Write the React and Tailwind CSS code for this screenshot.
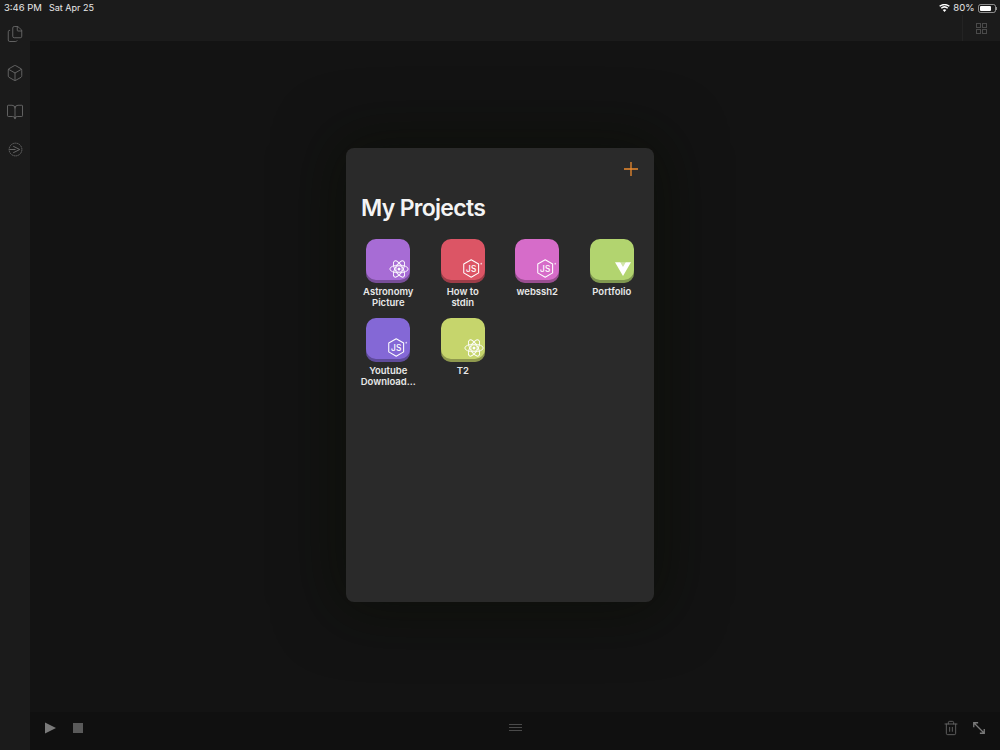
import { Files, Box, BookOpen, Trash2 } from "lucide-react";

const font = { fontFamily: "Inter, 'Liberation Sans', sans-serif" };

function ReactBadge() {
  return (
    <svg viewBox="0 0 24 24" className="absolute right-[1px] bottom-[4px] w-[20px] h-[20px]" fill="none" stroke="white" strokeWidth="1.1">
      <circle cx="12" cy="12" r="1.8" fill="white" stroke="none" />
      <circle cx="12" cy="12" r="3.8" strokeWidth="0.8" />
      <ellipse cx="12" cy="12" rx="11" ry="4.6" />
      <ellipse cx="12" cy="12" rx="11" ry="4.6" transform="rotate(60 12 12)" />
      <ellipse cx="12" cy="12" rx="11" ry="4.6" transform="rotate(120 12 12)" />
    </svg>
  );
}

function NodeBadge() {
  return (
    <svg viewBox="0 0 24 24" className="absolute right-[2px] bottom-[4px] w-[21px] h-[21px]" fill="none" stroke="white">
      <path d="M10.5 2 L19 6.8 V17 L10.5 22 L2 17 V6.8 Z" strokeWidth="1.2" strokeLinejoin="round" />
      <text x="10.5" y="15.6" textAnchor="middle" fontSize="9.5" fontWeight="500" fill="white" stroke="none" fontFamily="Inter, sans-serif">JS</text>
      <circle cx="22" cy="6.5" r="1" fill="white" stroke="none" opacity="0.7" />
    </svg>
  );
}

function VueBadge() {
  return (
    <svg viewBox="0 0 24 24" className="absolute right-[3px] bottom-[7px] w-[16px] h-[15px]" preserveAspectRatio="none">
      <path d="M0 2 H8 L12 9 L16 2 H24 L12 24 Z" fill="white" />
      <path d="M8 2 H16 L12 9 Z" fill="white" opacity="0.4" />
    </svg>
  );
}

function Tile({ name, bg, badge }) {
  return (
    <div className="flex flex-col items-center">
      <div className={"relative w-[44px] h-[44px] rounded-[10px] shadow-[inset_0_-3px_0_rgba(0,0,0,0.28)] " + bg}>
        {badge}
      </div>
      <div className="mt-[3px] w-[72px] text-center text-[9.5px] leading-[11px] font-semibold text-[#e8e8e8]">{name}</div>
    </div>
  );
}

const projects = [
  { name: <>Astronomy<br />Picture</>, bg: "bg-[#a76cd5]", badge: <ReactBadge /> },
  { name: <>How to<br />stdin</>, bg: "bg-[#dc5565]", badge: <NodeBadge /> },
  { name: "webssh2", bg: "bg-[#d66cc9]", badge: <NodeBadge /> },
  { name: "Portfolio", bg: "bg-[#b2d46f]", badge: <VueBadge /> },
  { name: <>Youtube<br />Download...</>, bg: "bg-[#8468d6]", badge: <NodeBadge /> },
  { name: "T2", bg: "bg-[#c6d56c]", badge: <ReactBadge /> },
];

function Wifi() {
  return (
    <svg viewBox="0 0 16 12" className="w-[11px] h-[8px]" fill="white">
      <path d="M8 12 L5.4 8.9 A4 4 0 0 1 10.6 8.9 Z" />
      <path d="M3.9 7.2 L2.4 5.5 A8.6 8.6 0 0 1 13.6 5.5 L12.1 7.2 A6.3 6.3 0 0 0 3.9 7.2 Z" />
      <path d="M1.4 4.3 L0 2.7 A12.4 12.4 0 0 1 16 2.7 L14.6 4.3 A10.2 10.2 0 0 0 1.4 4.3 Z" />
    </svg>
  );
}

function Battery() {
  return (
    <div className="flex items-center">
      <div className="w-[18px] h-[9px] rounded-[2.5px] border border-white/50 p-[1px]">
        <div className="h-full w-[80%] bg-white rounded-[1px]" />
      </div>
      <div className="w-[1px] h-[3px] bg-white/50 ml-[0.5px]" />
    </div>
  );
}

function RunIcon() {
  return (
    <svg viewBox="0 0 16 16" className="w-[15px] h-[15px]" fill="none" stroke="#6a6a6a" strokeWidth="1">
      <circle cx="8" cy="8" r="6.8" strokeDasharray="1.6 0.6" />
      <path d="M1.5 8 H8 M5.5 4.5 L12.5 8 L5.5 11.5" strokeLinejoin="round" />
    </svg>
  );
}

function Expand() {
  return (
    <svg viewBox="0 0 16 16" className="w-[14px] h-[14px]" fill="none" stroke="#7a7a7a" strokeWidth="1.5">
      <path d="M2 7 V2 H7 M2 2 L14 14 M9 14 H14 V9" />
    </svg>
  );
}

export default function App() {
  return (
    <div className="relative w-[1000px] h-[750px] overflow-hidden flex flex-col bg-[#1b1b1b] text-white" style={font}>
      <div className="h-[15px] pt-[1px] flex items-center justify-between pl-[4px] pr-[3px] text-[9.5px] text-[#e8e8e8]">
        <div className="flex gap-[7px]">
          <span>3:46 PM</span>
          <span className="text-[9px]">Sat Apr 25</span>
        </div>
        <div className="flex items-center gap-[3px]">
          <Wifi />
          <span>80%</span>
          <Battery />
        </div>
      </div>
      <div className="flex-1 flex min-h-0">
        <aside className="w-[30px] flex flex-col items-center pt-[10px] gap-[21px] text-[#6a6a6a]">
          <Files size={18} strokeWidth={1.2} />
          <Box size={18} strokeWidth={1.2} />
          <BookOpen size={18} strokeWidth={1.2} />
          <RunIcon />
        </aside>
        <div className="flex-1 flex flex-col min-w-0">
          <div className="h-[26px] flex justify-end">
            <div className="w-[38px] border-l border-[#232323] flex items-center justify-center">
              <div className="grid grid-cols-2 gap-[1px]">
                <div className="w-[5px] h-[5px] border border-[#4a4a4a]" />
                <div className="w-[5px] h-[5px] border border-[#4a4a4a]" />
                <div className="w-[5px] h-[5px] border border-[#4a4a4a]" />
                <div className="w-[5px] h-[5px] border border-[#4a4a4a]" />
              </div>
            </div>
          </div>
          <div className="flex-1 bg-[#131313]" />
          <div className="h-[38px] pb-[6px] bg-[#101010] flex items-center justify-between pl-[15px] pr-[14px] relative">
            <div className="flex items-center gap-[17px]">
              <svg viewBox="0 0 12 12" className="w-[11px] h-[12px]" fill="#7a7a7a"><path d="M0 0 L12 6 L0 12 Z" /></svg>
              <div className="w-[10px] h-[10px] bg-[#5a5a5a]" />
            </div>
            <div className="absolute left-[479px] top-[12px] flex flex-col gap-[2px]">
              <div className="w-[13px] h-[1px] bg-[#4a4a4a]" />
              <div className="w-[13px] h-[1px] bg-[#4a4a4a]" />
              <div className="w-[13px] h-[1px] bg-[#4a4a4a]" />
            </div>
            <div className="flex items-center gap-[13px] text-[#6a6a6a]">
              <Trash2 size={16} strokeWidth={1.3} />
              <Expand />
            </div>
          </div>
        </div>
      </div>
      <div className="absolute inset-0 flex items-start justify-center pt-[148px] pointer-events-none">
        <div className="w-[308px] h-[454px] rounded-[8px] bg-[#2a2a2a] flex flex-col shadow-[0_0_60px_10px_rgba(10,12,4,0.55)]">
          <div className="h-[41px] flex items-center justify-end pr-[16px]">
            <svg viewBox="0 0 14 14" className="w-[14px] h-[14px]" stroke="#ec8a2e" strokeWidth="1.3"><path d="M7 0 V14 M0 7 H14" /></svg>
          </div>
          <h1 className="pl-[15px] mt-[3px] text-[23px] leading-[32px] font-semibold tracking-[-0.7px] text-[#f4f4f4]">My Projects</h1>
          <div className="mt-[15px] px-[5px] grid grid-cols-4 auto-rows-[79px]">
            {projects.map((p, i) => (
              <Tile key={i} {...p} />
            ))}
          </div>
        </div>
      </div>
    </div>
  );
}
